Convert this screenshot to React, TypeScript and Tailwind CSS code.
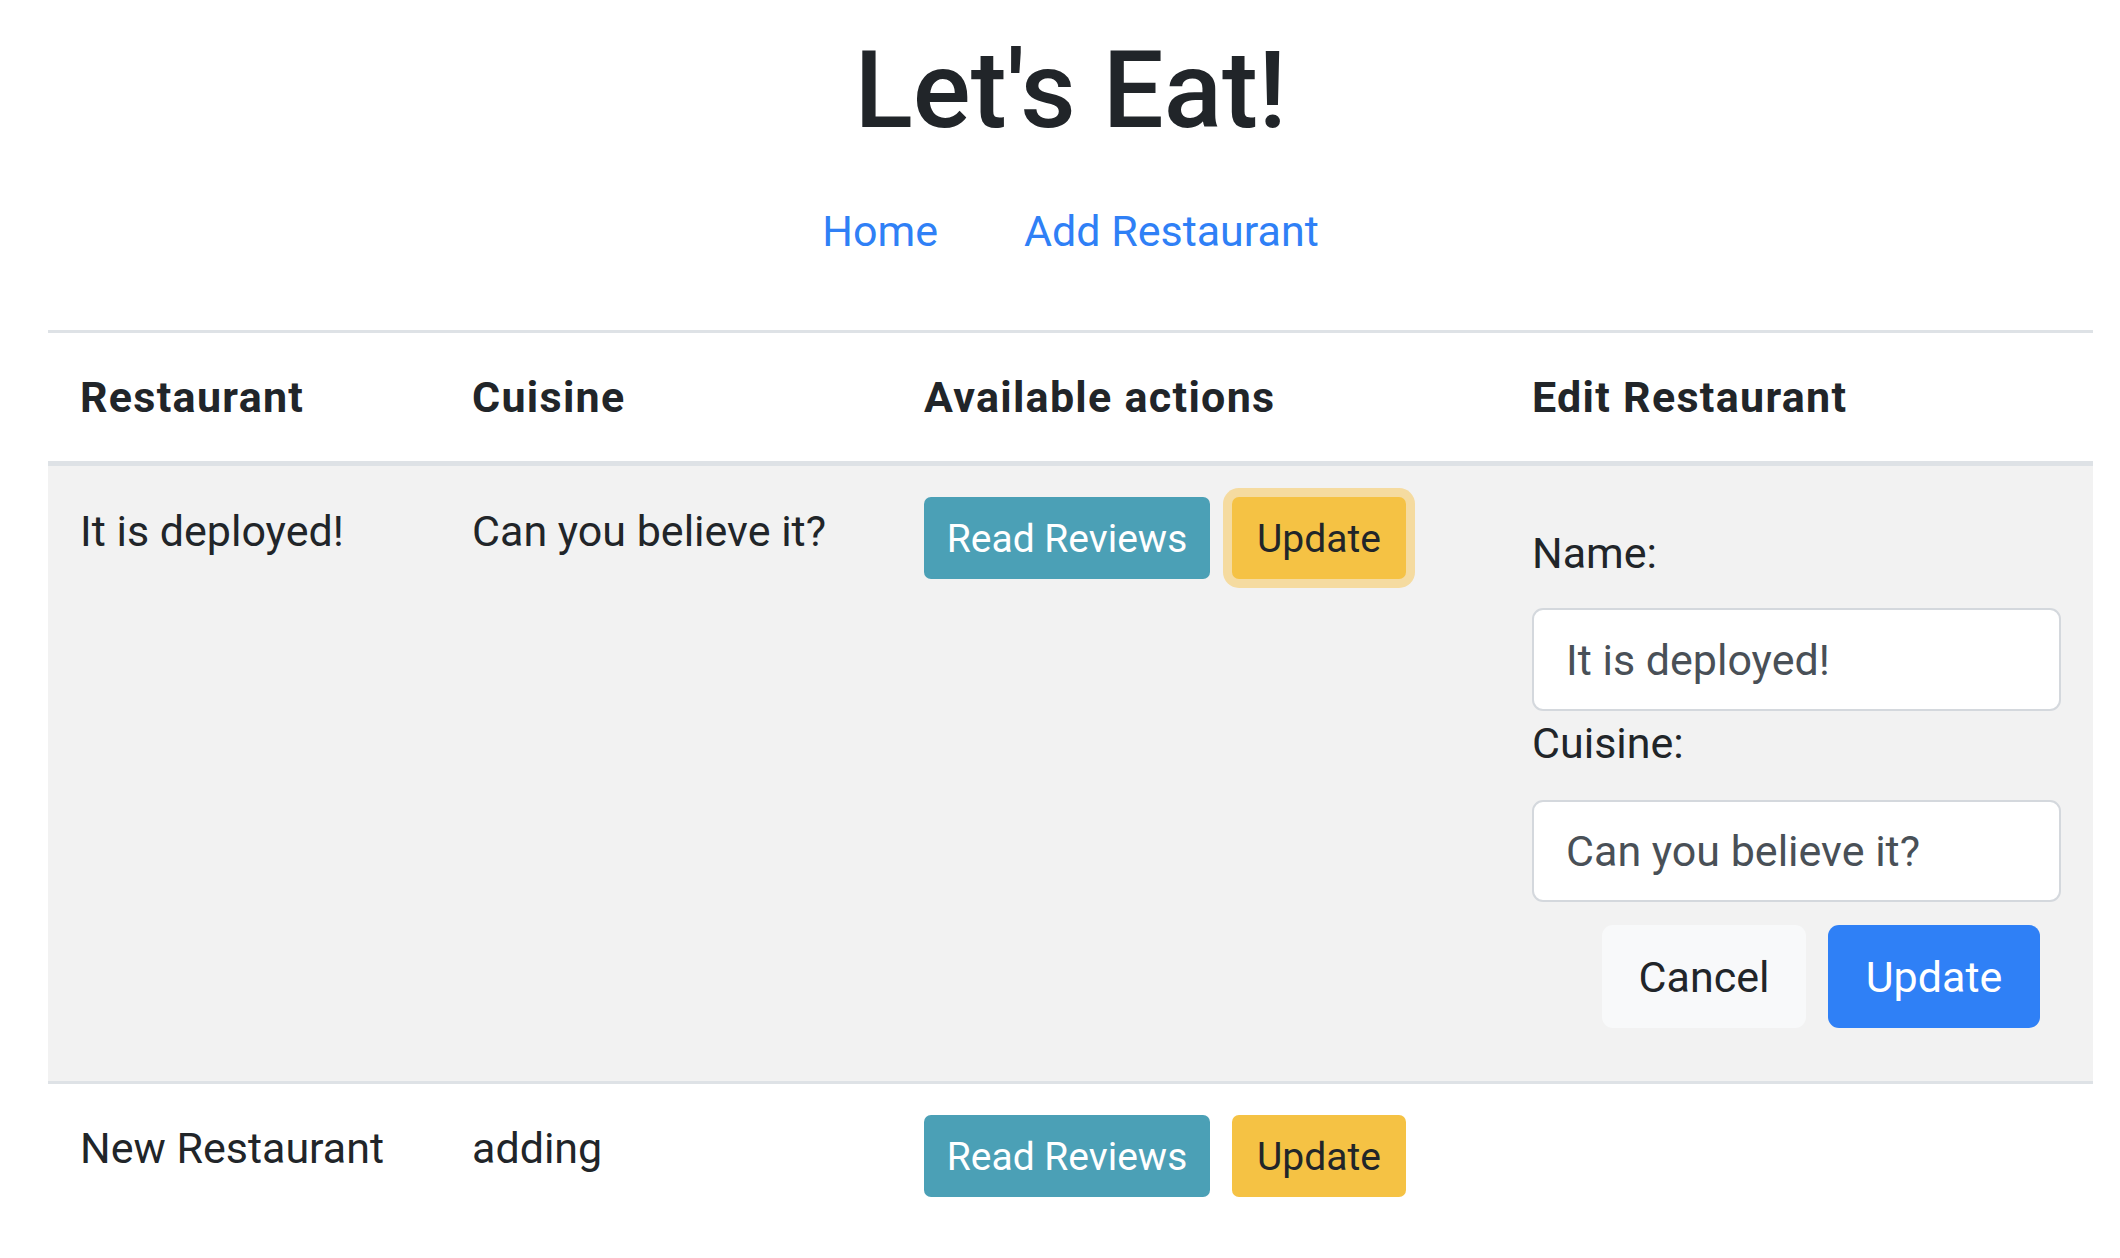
import React from "react";

function SmallButtons({ focused }: { focused?: boolean }) {
  return (
    <div className="flex items-start gap-[22px]">
      <button className="flex h-[82px] w-[286px] items-center justify-center rounded-[7px] bg-[#4ba0b6] pt-[2px] text-[39px] leading-[57px] text-white">
        Read Reviews
      </button>
      <button
        className={
          focused
            ? "flex h-[82px] w-[174px] items-center justify-center rounded-[7px] bg-[#f5c244] pt-[2px] text-[39px] leading-[57px] text-[#212529] ring-[9px] ring-[#f5dba0]"
            : "flex h-[82px] w-[174px] items-center justify-center rounded-[7px] bg-[#f5c244] pt-[2px] text-[39px] leading-[57px] text-[#212529]"
        }
      >
        Update
      </button>
    </div>
  );
}

export default function App() {
  return (
    <div className="min-h-screen bg-white font-['Roboto','Liberation_Sans',sans-serif] text-[43px] leading-[64px] text-[#212529]">
      <div className="pl-[48px] pr-[27px] pt-[25px]">
        <h1 className="mb-[23px] text-center text-[108px] font-medium leading-[130px] tracking-[0px]">
          Let's Eat!
        </h1>
        <nav className="flex justify-center">
          <a className="px-[43px] py-[21px] text-[43px] leading-[64px] text-[#2f80f6]">Home</a>
          <a className="px-[43px] py-[21px] text-[43px] leading-[64px] text-[#2f80f6]">Add Restaurant</a>
        </nav>
        <table className="mt-[46px] w-full table-fixed border-separate border-spacing-0 text-left">
          <colgroup>
            <col className="w-[392px]" />
            <col className="w-[452px]" />
            <col className="w-[608px]" />
            <col />
          </colgroup>
          <thead>
            <tr>
              <th className="border-t-[3px] border-b-[5px] border-[#dee2e6] px-[32px] py-[32px] align-bottom font-bold leading-[64px] tracking-[1.3px]">
                Restaurant
              </th>
              <th className="border-t-[3px] border-b-[5px] border-[#dee2e6] px-[32px] py-[32px] align-bottom font-bold leading-[64px] tracking-[1.3px]">
                Cuisine
              </th>
              <th className="border-t-[3px] border-b-[5px] border-[#dee2e6] px-[32px] py-[32px] align-bottom font-bold leading-[64px] tracking-[1.3px]">
                Available actions
              </th>
              <th className="border-t-[3px] border-b-[5px] border-[#dee2e6] px-[32px] py-[32px] align-bottom font-bold leading-[64px] tracking-[1.3px]">
                Edit Restaurant
              </th>
            </tr>
          </thead>
          <tbody>
            <tr className="bg-[#f2f2f2]">
              <td className="px-[32px] pb-[32px] pt-[33px] align-top">It is deployed!</td>
              <td className="px-[32px] pb-[32px] pt-[33px] align-top">Can you believe it?</td>
              <td className="px-[32px] pb-[32px] pt-[31px] align-top">
                <SmallButtons focused />
              </td>
              <td className="px-[32px] py-[32px] align-top">
                <label className="mb-[23px] mt-[23px] block leading-[64px]">Name:</label>
                <input
                  className="block h-[103px] w-full rounded-[11px] border-2 border-[#d4d8dd] bg-white px-[32px] text-[43px] text-[#495057] outline-none"
                  defaultValue="It is deployed!"
                />
                <label className="mb-[25px] block leading-[64px]">Cuisine:</label>
                <input
                  className="block h-[102px] w-full rounded-[11px] border-2 border-[#d4d8dd] bg-white px-[32px] text-[43px] text-[#495057] outline-none"
                  defaultValue="Can you believe it?"
                />
                <div className="mb-[21px] mt-[23px] flex justify-end gap-[22px] pr-[21px]">
                  <button className="flex h-[103px] w-[204px] items-center justify-center rounded-[11px] bg-[#f8f9fa] text-[43px] text-[#212529]">
                    Cancel
                  </button>
                  <button className="flex h-[103px] w-[212px] items-center justify-center rounded-[11px] bg-[#2f80f6] text-[43px] text-white">
                    Update
                  </button>
                </div>
              </td>
            </tr>
            <tr>
              <td className="border-t-[3px] border-[#dee2e6] px-[32px] pb-[32px] pt-[32px] align-top">New Restaurant</td>
              <td className="border-t-[3px] border-[#dee2e6] px-[32px] pb-[32px] pt-[32px] align-top">adding</td>
              <td className="border-t-[3px] border-[#dee2e6] px-[32px] pb-[32px] pt-[31px] align-top">
                <SmallButtons />
              </td>
              <td className="border-t-[3px] border-[#dee2e6] px-[32px] py-[32px] align-top"></td>
            </tr>
          </tbody>
        </table>
      </div>
    </div>
  );
}
